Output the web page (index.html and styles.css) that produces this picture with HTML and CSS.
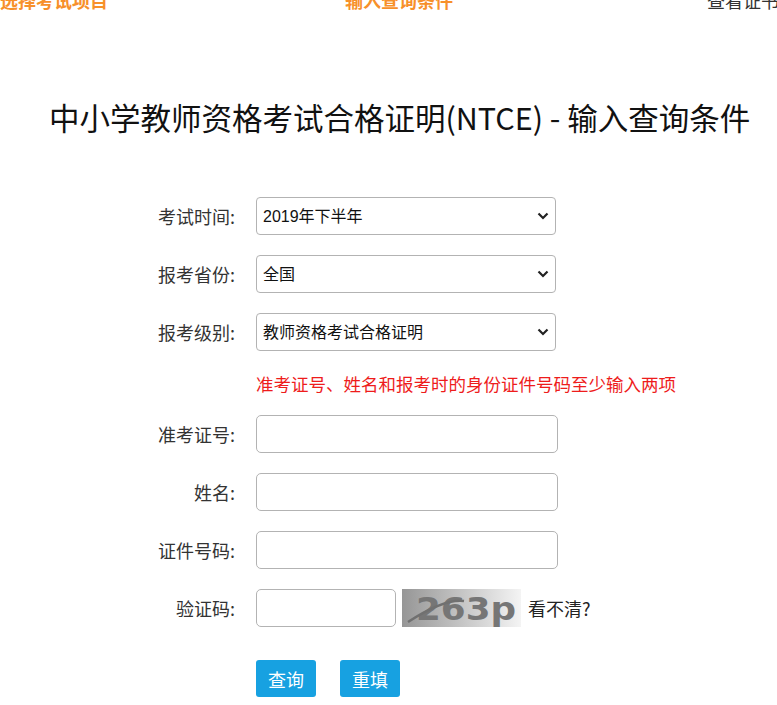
FILE: index.html
```html
<!DOCTYPE html>
<html lang="zh-CN">

<head>
    <meta charset="UTF-8">
    <meta name="viewport" content="width=device-width, initial-scale=1.0">
    <title>中小学教师资格考试合格证明查询</title>
    <link rel="stylesheet" href="styles.css">
</head>

<body>
    <div class="nav">
        <span class="step active">选择考试项目</span>
        <span class="step active mid">输入查询条件</span>
        <span class="step last">查看证书</span>
    </div>

    <h1 class="title">中小学教师资格考试合格证明(NTCE) - 输入查询条件</h1>

    <form class="query">
        <div class="row">
            <label>考试时间:</label>
            <div class="sel-wrap">
                <select class="sel">
                    <option>2019年下半年</option>
                </select>
                <svg class="arrow" width="12" height="8" viewBox="0 0 12 8"><path d="M1.5 1.5 L6 6 L10.5 1.5" /></svg>
            </div>
        </div>
        <div class="row">
            <label>报考省份:</label>
            <div class="sel-wrap">
                <select class="sel">
                    <option>全国</option>
                </select>
                <svg class="arrow" width="12" height="8" viewBox="0 0 12 8"><path d="M1.5 1.5 L6 6 L10.5 1.5" /></svg>
            </div>
        </div>
        <div class="row">
            <label>报考级别:</label>
            <div class="sel-wrap">
                <select class="sel">
                    <option>教师资格考试合格证明</option>
                </select>
                <svg class="arrow" width="12" height="8" viewBox="0 0 12 8"><path d="M1.5 1.5 L6 6 L10.5 1.5" /></svg>
            </div>
        </div>
        <div class="row tip">
            <label></label>
            <span>准考证号、姓名和报考时的身份证件号码至少输入两项</span>
        </div>
        <div class="row">
            <label>准考证号:</label>
            <input class="txt" type="text">
        </div>
        <div class="row">
            <label>姓名:</label>
            <input class="txt" type="text">
        </div>
        <div class="row">
            <label>证件号码:</label>
            <input class="txt" type="text">
        </div>
        <div class="row">
            <label>验证码:</label>
            <input class="txt code" type="text">
            <svg class="captcha" width="119" height="38" viewBox="0 0 119 38">
                <defs>
                    <linearGradient id="cg" x1="0" y1="0" x2="1" y2="0">
                        <stop offset="0" stop-color="#969696"/>
                        <stop offset="1" stop-color="#f4f4f4"/>
                    </linearGradient>
                </defs>
                <rect width="119" height="38" fill="url(#cg)"/>
                <text x="14" y="31" class="cap-text" textLength="100" lengthAdjust="spacingAndGlyphs">263p</text>
                <path d="M6 33 C 26 20, 46 10, 62 12" stroke="#707070" stroke-width="2.5" fill="none"/>
            </svg>
            <a class="refresh">看不清?</a>
        </div>
        <div class="row btns">
            <label></label>
            <button type="button" class="btn">查询</button>
            <button type="button" class="btn">重填</button>
        </div>
    </form>
</body>

</html>
```

FILE: styles.css
```css
body {
    margin: 0;
    font-family: "Noto Sans CJK SC", "Liberation Sans", sans-serif;
    color: #222;
    background: #fff;
}

.nav {
    display: flex;
    margin-top: -13px;
    height: 26px;
    line-height: 26px;
    font-size: 18px;
    white-space: nowrap;
    overflow: hidden;

    .step {
        display: block;
        color: #333;
    }

    .active {
        color: #f7902a;
        font-weight: bold;
    }

    .mid {
        margin-left: 237px;
    }

    .last {
        margin-left: 254px;
    }
}

.title {
    margin: 82px 0 0 0;
    padding-left: 49px;
    font-size: 30.5px;
    font-weight: normal;
    line-height: 44px;
    color: #111;
    white-space: nowrap;
}

.query {
    margin-top: 58px;
}

.row {
    display: flex;
    align-items: center;
    height: 38px;
    margin-bottom: 20px;

    label {
        width: 235px;
        margin-right: 21px;
        text-align: right;
        font-size: 18px;
        color: #333;
    }
}

.tip {
    height: 24px;

    span {
        color: #ee1c1c;
        font-size: 17.5px;
        white-space: nowrap;
    }
}

.sel-wrap {
    position: relative;
    height: 38px;

    .arrow {
        position: absolute;
        right: 7px;
        top: 15px;
        pointer-events: none;

        path {
            fill: none;
            stroke: #222;
            stroke-width: 2.2;
        }
    }
}

.sel {
    appearance: none;
    width: 300px;
    height: 38px;
    padding: 0 6px;
    border: 1px solid #b3b3b3;
    border-radius: 4px;
    background: #fff;
    font-size: 16px;
    font-family: "Liberation Sans", "Noto Sans CJK SC", sans-serif;
    color: #111;
}

.txt {
    box-sizing: border-box;
    width: 302px;
    height: 38px;
    border: 1px solid #b3b3b3;
    border-radius: 5px;
    background: #fff;
    font-size: 16px;
}

.code {
    width: 140px;
}

.captcha {
    margin-left: 6px;
    display: block;
}

.cap-text {
    font-family: "DejaVu Sans", sans-serif;
    font-weight: bold;
    font-size: 32px;
    fill: #767676;
}

.refresh {
    margin-left: 7px;
    font-size: 18px;
    color: #222;
}

.btns {
    margin-top: 33px;
    height: 37px;

    .btn {
        width: 60px;
        height: 37px;
        margin-right: 24px;
        border: none;
        border-radius: 3px;
        background: #17a1e1;
        color: #fff;
        font-size: 18px;
        font-family: "Noto Sans CJK SC", sans-serif;
    }
}
```
